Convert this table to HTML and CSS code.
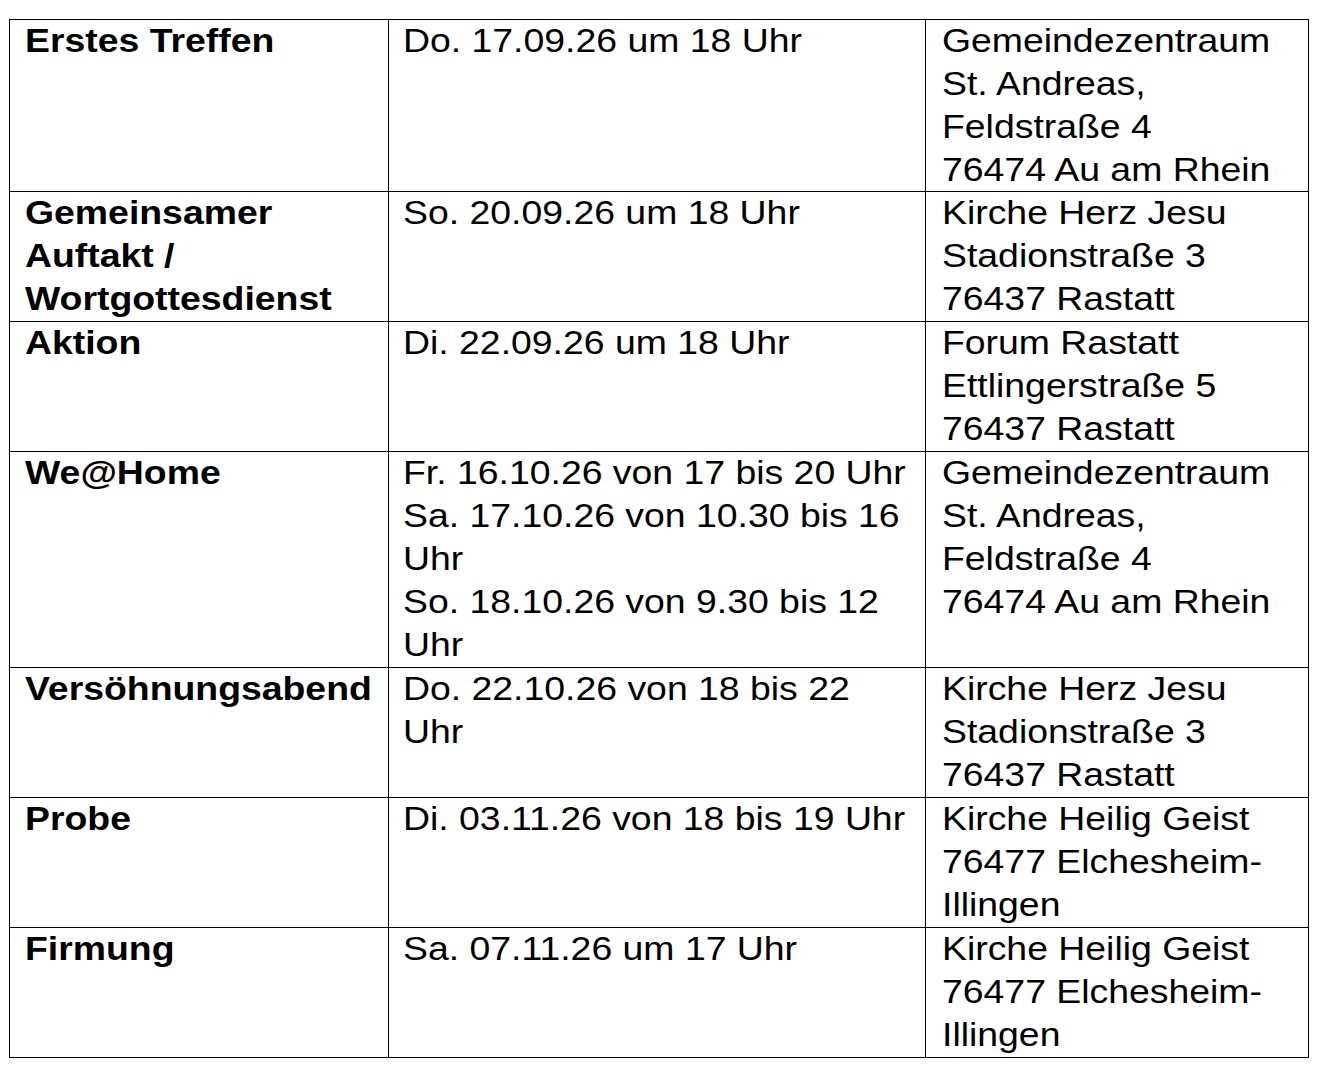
FILE: index.html
```html
<!DOCTYPE html>
<html lang="de">
<head>
<meta charset="utf-8">
<title>Termine Firmung</title>
<link rel="stylesheet" href="styles.css">
</head>
<body>
<div class="schedule">
  <div class="cell c1"><div class="txt">Erstes Treffen</div></div>
  <div class="cell c2"><div class="txt">Do. 17.09.26 um 18 Uhr</div></div>
  <div class="cell c3"><div class="txt">Gemeindezentraum<br>St. Andreas,<br>Feldstraße 4<br>76474 Au am Rhein</div></div>

  <div class="cell c1"><div class="txt">Gemeinsamer<br>Auftakt /<br>Wortgottesdienst</div></div>
  <div class="cell c2"><div class="txt">So. 20.09.26 um 18 Uhr</div></div>
  <div class="cell c3"><div class="txt">Kirche Herz Jesu<br>Stadionstraße 3<br>76437 Rastatt</div></div>

  <div class="cell c1"><div class="txt">Aktion</div></div>
  <div class="cell c2"><div class="txt">Di. 22.09.26 um 18 Uhr</div></div>
  <div class="cell c3"><div class="txt">Forum Rastatt<br>Ettlingerstraße 5<br>76437 Rastatt</div></div>

  <div class="cell c1"><div class="txt">We@Home</div></div>
  <div class="cell c2"><div class="txt">Fr. 16.10.26 von 17 bis 20 Uhr<br>Sa. 17.10.26 von 10.30 bis 16<br>Uhr<br>So. 18.10.26 von 9.30 bis 12<br>Uhr</div></div>
  <div class="cell c3"><div class="txt">Gemeindezentraum<br>St. Andreas,<br>Feldstraße 4<br>76474 Au am Rhein</div></div>

  <div class="cell c1"><div class="txt">Versöhnungsabend</div></div>
  <div class="cell c2"><div class="txt">Do. 22.10.26 von 18 bis 22<br>Uhr</div></div>
  <div class="cell c3"><div class="txt">Kirche Herz Jesu<br>Stadionstraße 3<br>76437 Rastatt</div></div>

  <div class="cell c1"><div class="txt">Probe</div></div>
  <div class="cell c2"><div class="txt">Di. 03.11.26 von 18 bis 19 Uhr</div></div>
  <div class="cell c3"><div class="txt">Kirche Heilig Geist<br>76477 Elchesheim-<br>Illingen</div></div>

  <div class="cell c1"><div class="txt">Firmung</div></div>
  <div class="cell c2"><div class="txt">Sa. 07.11.26 um 17 Uhr</div></div>
  <div class="cell c3"><div class="txt">Kirche Heilig Geist<br>76477 Elchesheim-<br>Illingen</div></div>
</div>
</body>
</html>
```
FILE: styles.css
```css
html, body {
  margin: 0;
  padding: 0;
  background: #ffffff;
}

body {
  font-family: "Liberation Sans", Arial, sans-serif;
  color: #000000;
}

.schedule {
  display: grid;
  grid-template-columns: 379px 537px 383px;
  grid-template-rows: 172px;
  grid-auto-rows: auto;
  margin: 19px 0 0 9px;
  width: max-content;
  border-top: 1px solid #000;
  border-left: 1px solid #000;
}

.cell {
  box-sizing: border-box;
  border-right: 1px solid #000;
  border-bottom: 1px solid #000;
  padding: 0 0 0 14px;
  font-size: 32.5px;
  line-height: 43px;
  overflow: visible;
}

.c1 {
  font-weight: bold;
  padding-left: 14.5px;
}

.c2 {
  padding-left: 14px;
}

.c3 {
  padding-left: 16px;
}

.txt {
  white-space: nowrap;
  transform: scaleX(1.15);
  transform-origin: 0 0;
}
```
